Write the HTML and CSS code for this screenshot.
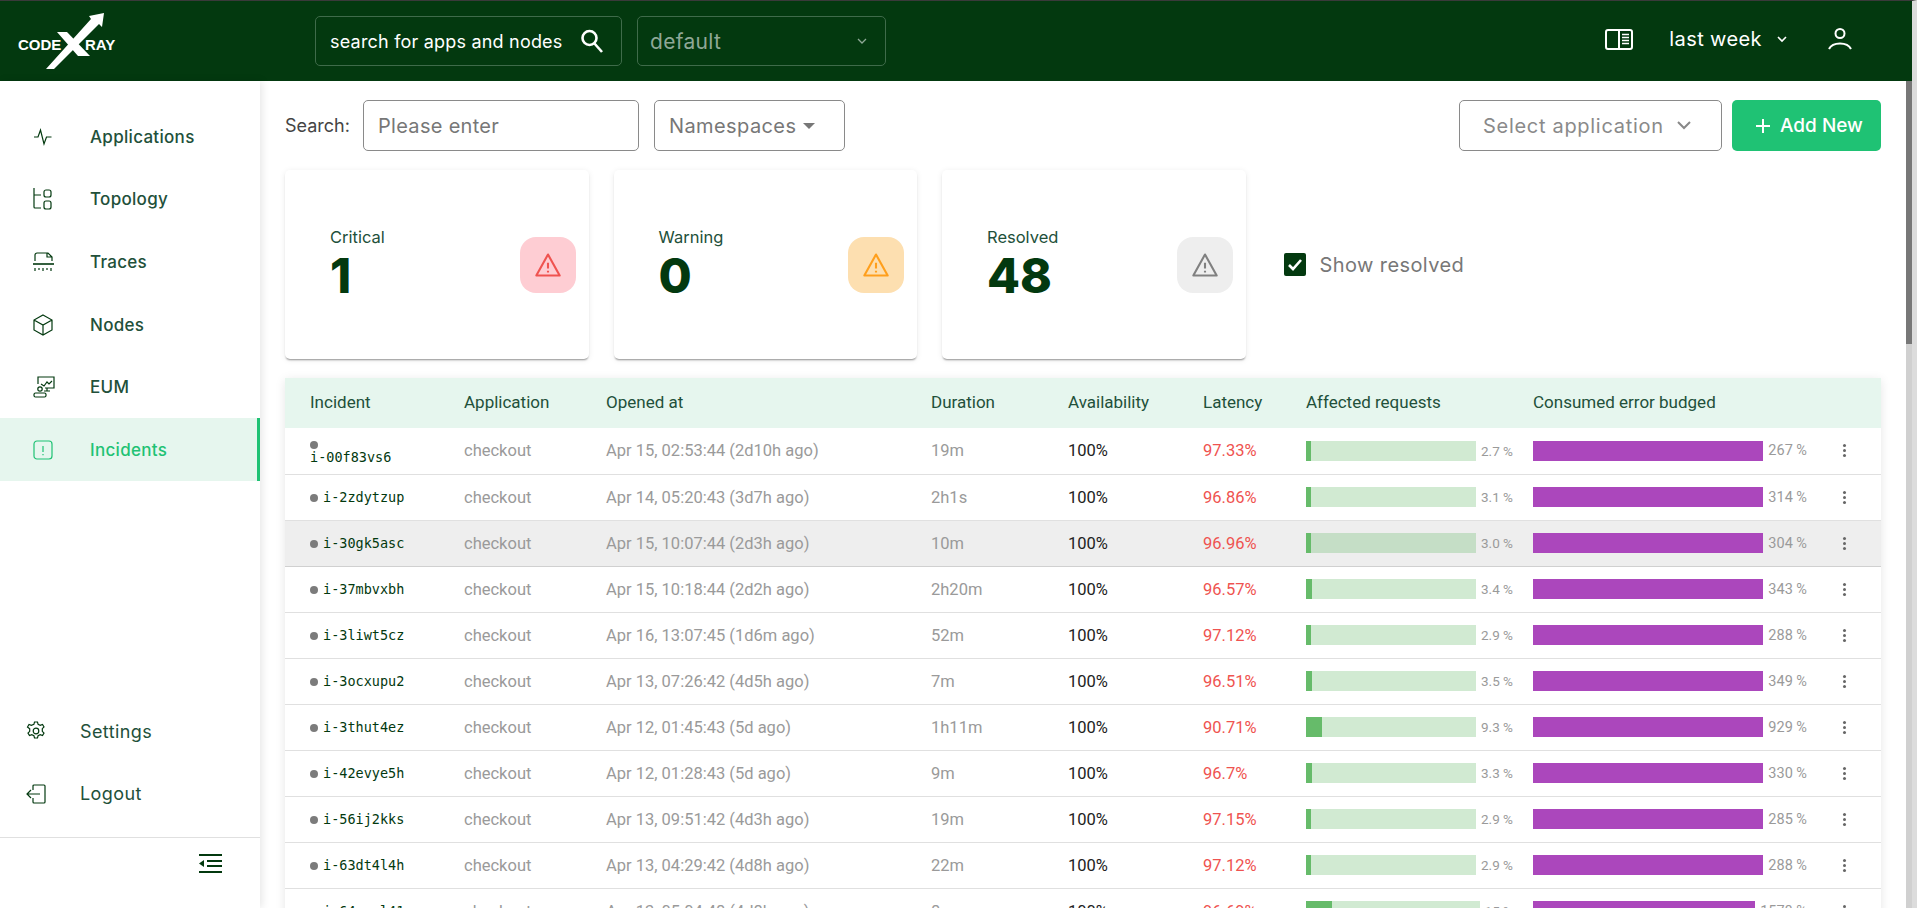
FILE: index.html
```html
<!DOCTYPE html>
<html lang="en">
<head>
  <meta charset="UTF-8" />
  <meta name="viewport" content="width=device-width, initial-scale=1" />
  <title>Incidents</title>
  <link rel="stylesheet" href="styles.css">
</head>
<body>
  <header class="topbar">
    <a class="logo" href="#">
      <svg width="104" height="60" viewBox="0 0 104 60">
        <text class="logo-text" x="0" y="40">CODE</text>
        <text class="logo-text" x="67" y="40">RAY</text>
        <polygon fill="#fff" points="39,22 49,22 72,46 60,46"/>
        <polygon fill="#fff" points="28,59 73,9 71,6 86,3 84,17 81,14 36,59"/>
      </svg>
    </a>
    <div class="top-search">
      <span>search for apps and nodes</span>
      <svg width="26" height="26" viewBox="0 0 26 26" fill="none" stroke="#fff" stroke-width="2.6"><circle cx="10.5" cy="10" r="7"/><path d="M15.5 15.5 23 24"/></svg>
    </div>
    <div class="top-select">
      <span>default</span>
      <svg width="10" height="6" viewBox="0 0 10 6" fill="none" stroke="#8fa897" stroke-width="1.3"><path d="M1 1l4 4 4-4"/></svg>
    </div>
    <div class="top-right">
      <svg width="28" height="21" viewBox="0 0 28 21" fill="none" stroke="#fff" stroke-width="2"><rect x="1" y="1" width="26" height="19" rx="2"/><path d="M14 1v19"/><path d="M17 5.500h7M17 8.500h7M17 11.500h7M17 14.500h7" stroke-width="1.500"/></svg>
      <div class="period">
        <span>last week</span>
        <svg width="10" height="7" viewBox="0 0 10 7" fill="none" stroke="#fff" stroke-width="1.600"><path d="M1 1l4 4 4-4"/></svg>
      </div>
      <svg width="24" height="22" viewBox="0 0 24 22" fill="none" stroke="#fff" stroke-width="2"><circle cx="12" cy="5.500" r="4.500"/><path d="M1 21c2-4 6.500-5.500 11-5.500S21 17 23 21"/></svg>
    </div>
  </header>

  <div class="app">
    <aside class="sidebar">
      <nav class="menu">
        <a class="menu-item" href="#">
          <svg width="20" height="20" viewBox="0 0 20 20" fill="none" stroke="#03390f" stroke-width="1.200"><path d="M1 10h4l2.500-7 3.500 14 2.500-7h5"/></svg>
          <span>Applications</span>
        </a>
        <a class="menu-item" href="#">
          <svg width="20" height="22" viewBox="0 0 20 22" fill="none" stroke="#03390f" stroke-width="1.200"><path d="M1 0v19a1 1 0 0 0 1 1h6M1 7h7"/><rect x="11" y="2" width="7" height="7" rx="2"/><rect x="11" y="13" width="7" height="8" rx="2"/></svg>
          <span>Topology</span>
        </a>
        <a class="menu-item" href="#">
          <svg width="21" height="20" viewBox="0 0 21 20" fill="none" stroke="#03390f" stroke-width="1.200"><path d="M2 9V3a2 2 0 0 1 2-2h11l4 4v4M14 1v4h5"/><path d="M0 12h21" stroke-width="1.600"/><path d="M2 16v3M6 16v2M10 16v3M14 16v2M18 16v3"/></svg>
          <span>Traces</span>
        </a>
        <a class="menu-item" href="#">
          <svg width="20" height="22" viewBox="0 0 20 22" fill="none" stroke="#03390f" stroke-width="1.200"><path d="M10 1l9 5v10l-9 5-9-5V6zM1 6l9 5 9-5M10 11v10"/></svg>
          <span>Nodes</span>
        </a>
        <a class="menu-item" href="#">
          <svg width="22" height="22" viewBox="0 0 22 22" fill="none" stroke="#03390f" stroke-width="1.200"><path d="M5 8V1h16v11h-9M14 12v3M11 15h6"/><path d="M8 8l3 2 3-4 2 2 3-3"/><circle cx="7" cy="13" r="2.200"/><rect x="1" y="17" width="12" height="4" rx="1.500"/></svg>
          <span>EUM</span>
        </a>
        <a class="menu-item menu-active" href="#">
          <svg width="20" height="20" viewBox="0 0 20 20" fill="none" stroke="#1fc274" stroke-width="1.200"><rect x="1" y="1" width="18" height="18" rx="3"/><path d="M10 6v6M10 14v1.200"/></svg>
          <span>Incidents</span>
        </a>
      </nav>
      <div class="menu-bottom">
        <a class="menu-item" href="#">
          <svg width="20" height="20" viewBox="0 0 20 20" fill="none" stroke="#03390f" stroke-width="1.200"><circle cx="10" cy="10" r="2.800"/><path d="M8.500 1h3l.6 2.400 2.100 1 2.300-1 1.500 2.600-1.700 1.700v2.600l1.700 1.700-1.500 2.600-2.300-1-2.100 1-.6 2.400h-3l-.6-2.400-2.100-1-2.300 1-1.500-2.600 1.700-1.700V7.700L1.500 6 3 3.400l2.300 1 2.600-1z"/></svg>
          <span>Settings</span>
        </a>
        <a class="menu-item" href="#">
          <svg width="20" height="20" viewBox="0 0 20 20" fill="none" stroke="#03390f" stroke-width="1.200"><path d="M7 6V2a1 1 0 0 1 1-1h10a1 1 0 0 1 1 1v16a1 1 0 0 1-1 1H8a1 1 0 0 1-1-1v-4M14 10H1M5 6l-4 4 4 4"/></svg>
          <span>Logout</span>
        </a>
      </div>
      <div class="collapse">
        <svg width="23" height="20" viewBox="0 0 23 20" fill="#03390f"><rect width="23" height="2"/><rect x="8" y="6" width="15" height="2"/><rect x="8" y="11" width="15" height="2"/><rect y="17" width="23" height="2"/><path d="M0 9.500 5 6v7z"/></svg>
      </div>
    </aside>

    <main class="content">
      <div class="filters">
        <label class="search-label" for="busca">Search:</label>
        <input class="search-input" id="busca" type="text" placeholder="Please enter">
        <button class="ns-btn">Namespaces <i class="caret"></i></button>
        <button class="app-btn">
          Select application
          <svg width="14" height="9" viewBox="0 0 14 9" fill="none" stroke="#888" stroke-width="2"><path d="M1 1l6 6 6-6"/></svg>
        </button>
        <button class="add-btn">
          <svg width="14" height="14" viewBox="0 0 14 14" stroke="#fff" stroke-width="2"><path d="M7 0v14M0 7h14"/></svg>
          Add New
        </button>
      </div>

      <section class="summary">
        <div class="card">
          <div class="card-text"><span class="card-label">Critical</span><strong class="card-num">1</strong></div>
          <div class="tile tile-red">
            <svg width="28" height="28" viewBox="0 0 24 24" fill="none" stroke="#ef5350" stroke-width="1.800" stroke-linejoin="round"><path d="M12 3 22 21H2zM12 10v5M12 17v1.500"/></svg>
          </div>
        </div>
        <div class="card">
          <div class="card-text"><span class="card-label">Warning</span><strong class="card-num">0</strong></div>
          <div class="tile tile-orange">
            <svg width="28" height="28" viewBox="0 0 24 24" fill="none" stroke="#ff9f1c" stroke-width="1.800" stroke-linejoin="round"><path d="M12 3 22 21H2zM12 10v5M12 17v1.500"/></svg>
          </div>
        </div>
        <div class="card">
          <div class="card-text"><span class="card-label">Resolved</span><strong class="card-num">48</strong></div>
          <div class="tile tile-gray">
            <svg width="28" height="28" viewBox="0 0 24 24" fill="none" stroke="#808080" stroke-width="1.800" stroke-linejoin="round"><path d="M12 3 22 21H2zM12 10v5M12 17v1.500"/></svg>
          </div>
        </div>
        <label class="show-resolved">
          <span class="check"><svg width="16" height="14" viewBox="0 0 16 14" fill="none" stroke="#fff" stroke-width="2.600"><path d="M2 7l4 4 8-9"/></svg></span>
          Show resolved
        </label>
      </section>

      <table class="incidents">
        <colgroup>
          <col class="c-id"><col class="c-app"><col class="c-open"><col class="c-dur"><col class="c-avail"><col class="c-lat"><col class="c-req"><col class="c-budget"><col class="c-menu">
        </colgroup>
        <thead>
          <tr>
            <th>Incident</th><th>Application</th><th>Opened at</th><th>Duration</th><th>Availability</th><th>Latency</th><th>Affected requests</th><th class="budget">Consumed error budged</th><th></th>
          </tr>
        </thead>
        <tbody>
          <tr>
            <td class="inc"><i class="dot"></i><br><span>i-00f83vs6</span></td><td class="muted">checkout</td><td class="muted">Apr 15, 02:53:44 (2d10h ago)</td><td class="muted">19m</td><td class="avail">100%</td><td class="lat">97.33%</td>
            <td><div class="meter"><div class="bar bar-green"><div class="fill" style="width:2.7%"></div></div><span>2.7 %</span></div></td>
            <td class="budget"><div class="meter"><div class="bar bar-purple"></div><span>267 %</span></div></td>
            <td class="more"><b></b></td>
          </tr>
          <tr>
            <td class="inc"><i class="dot"></i><span>i-2zdytzup</span></td><td class="muted">checkout</td><td class="muted">Apr 14, 05:20:43 (3d7h ago)</td><td class="muted">2h1s</td><td class="avail">100%</td><td class="lat">96.86%</td>
            <td><div class="meter"><div class="bar bar-green"><div class="fill" style="width:3.1%"></div></div><span>3.1 %</span></div></td>
            <td class="budget"><div class="meter"><div class="bar bar-purple"></div><span>314 %</span></div></td>
            <td class="more"><b></b></td>
          </tr>
          <tr class="row-hover">
            <td class="inc"><i class="dot"></i><span>i-30gk5asc</span></td><td class="muted">checkout</td><td class="muted">Apr 15, 10:07:44 (2d3h ago)</td><td class="muted">10m</td><td class="avail">100%</td><td class="lat">96.96%</td>
            <td><div class="meter"><div class="bar bar-green"><div class="fill" style="width:3%"></div></div><span>3.0 %</span></div></td>
            <td class="budget"><div class="meter"><div class="bar bar-purple"></div><span>304 %</span></div></td>
            <td class="more"><b></b></td>
          </tr>
          <tr>
            <td class="inc"><i class="dot"></i><span>i-37mbvxbh</span></td><td class="muted">checkout</td><td class="muted">Apr 15, 10:18:44 (2d2h ago)</td><td class="muted">2h20m</td><td class="avail">100%</td><td class="lat">96.57%</td>
            <td><div class="meter"><div class="bar bar-green"><div class="fill" style="width:3.4%"></div></div><span>3.4 %</span></div></td>
            <td class="budget"><div class="meter"><div class="bar bar-purple"></div><span>343 %</span></div></td>
            <td class="more"><b></b></td>
          </tr>
          <tr>
            <td class="inc"><i class="dot"></i><span>i-3liwt5cz</span></td><td class="muted">checkout</td><td class="muted">Apr 16, 13:07:45 (1d6m ago)</td><td class="muted">52m</td><td class="avail">100%</td><td class="lat">97.12%</td>
            <td><div class="meter"><div class="bar bar-green"><div class="fill" style="width:2.9%"></div></div><span>2.9 %</span></div></td>
            <td class="budget"><div class="meter"><div class="bar bar-purple"></div><span>288 %</span></div></td>
            <td class="more"><b></b></td>
          </tr>
          <tr>
            <td class="inc"><i class="dot"></i><span>i-3ocxupu2</span></td><td class="muted">checkout</td><td class="muted">Apr 13, 07:26:42 (4d5h ago)</td><td class="muted">7m</td><td class="avail">100%</td><td class="lat">96.51%</td>
            <td><div class="meter"><div class="bar bar-green"><div class="fill" style="width:3.5%"></div></div><span>3.5 %</span></div></td>
            <td class="budget"><div class="meter"><div class="bar bar-purple"></div><span>349 %</span></div></td>
            <td class="more"><b></b></td>
          </tr>
          <tr>
            <td class="inc"><i class="dot"></i><span>i-3thut4ez</span></td><td class="muted">checkout</td><td class="muted">Apr 12, 01:45:43 (5d ago)</td><td class="muted">1h11m</td><td class="avail">100%</td><td class="lat">90.71%</td>
            <td><div class="meter"><div class="bar bar-green"><div class="fill" style="width:9.3%"></div></div><span>9.3 %</span></div></td>
            <td class="budget"><div class="meter"><div class="bar bar-purple"></div><span>929 %</span></div></td>
            <td class="more"><b></b></td>
          </tr>
          <tr>
            <td class="inc"><i class="dot"></i><span>i-42evye5h</span></td><td class="muted">checkout</td><td class="muted">Apr 12, 01:28:43 (5d ago)</td><td class="muted">9m</td><td class="avail">100%</td><td class="lat">96.7%</td>
            <td><div class="meter"><div class="bar bar-green"><div class="fill" style="width:3.3%"></div></div><span>3.3 %</span></div></td>
            <td class="budget"><div class="meter"><div class="bar bar-purple"></div><span>330 %</span></div></td>
            <td class="more"><b></b></td>
          </tr>
          <tr>
            <td class="inc"><i class="dot"></i><span>i-56ij2kks</span></td><td class="muted">checkout</td><td class="muted">Apr 13, 09:51:42 (4d3h ago)</td><td class="muted">19m</td><td class="avail">100%</td><td class="lat">97.15%</td>
            <td><div class="meter"><div class="bar bar-green"><div class="fill" style="width:2.9%"></div></div><span>2.9 %</span></div></td>
            <td class="budget"><div class="meter"><div class="bar bar-purple"></div><span>285 %</span></div></td>
            <td class="more"><b></b></td>
          </tr>
          <tr>
            <td class="inc"><i class="dot"></i><span>i-63dt4l4h</span></td><td class="muted">checkout</td><td class="muted">Apr 13, 04:29:42 (4d8h ago)</td><td class="muted">22m</td><td class="avail">100%</td><td class="lat">97.12%</td>
            <td><div class="meter"><div class="bar bar-green"><div class="fill" style="width:2.9%"></div></div><span>2.9 %</span></div></td>
            <td class="budget"><div class="meter"><div class="bar bar-purple"></div><span>288 %</span></div></td>
            <td class="more"><b></b></td>
          </tr>
          <tr>
            <td class="inc"><i class="dot"></i><span>i-64wsql41</span></td><td class="muted">checkout</td><td class="muted">Apr 13, 05:04:48 (4d8h ago)</td><td class="muted">8m</td><td class="avail">100%</td><td class="lat">96.69%</td>
            <td><div class="meter"><div class="bar bar-green"><div class="fill" style="width:15%"></div></div><span>15 %</span></div></td>
            <td class="budget"><div class="meter"><div class="bar bar-purple"></div><span>1578 %</span></div></td>
            <td class="more"><b></b></td>
          </tr>
        </tbody>
      </table>
    </main>

    <div class="rail"><div class="rail-thumb"></div></div>
  </div>
</body>
</html>
```

FILE: styles.css
```css
:root {
  --verde-escuro: #03390f;
  --verde-texto: #22503a;
  --verde: #1fc274;
  --verde-claro: #e6f6ee;
  --cinza-texto: #9a9a9a;
  --borda: #e0e0e0;
}

* {
  box-sizing: border-box;
}

html,
body {
  height: 100%;
}

body {
  margin: 0;
  overflow: hidden;
  display: flex;
  flex-direction: column;
  font-family: Inter, sans-serif;
  background: #fff;
  border-top: 1px solid #3a3a3a;
  border-right: 5px solid #dcdcdc;
}

a {
  text-decoration: none;
  color: inherit;
}

svg {
  flex: none;
  display: block;
}

.topbar {
  flex: none;
  height: 80px;
  display: flex;
  align-items: center;
  background: var(--verde-escuro);
}

.logo {
  width: 315px;
  padding: 0 0 2px 18px;
}

.logo-text {
  font: 700 15px "Liberation Sans", sans-serif;
  fill: #fff;
}

.top-search,
.top-select {
  height: 50px;
  display: flex;
  align-items: center;
  justify-content: space-between;
  border: 1px solid #3f6b4a;
  border-radius: 5px;
}

.top-search {
  width: 307px;
  padding: 0 16px 0 14px;
  margin-right: 15px;
  color: #fff;
  font-size: 18px;
  letter-spacing: 0.2px;
}

.top-select {
  width: 249px;
  padding: 0 18px 0 12px;
  color: #8fa897;
  font-size: 21px;
  letter-spacing: 0.3px;
}

.top-right {
  margin-left: auto;
  display: flex;
  align-items: center;
  padding: 0 60px 0 0;
  margin-bottom: 4px;
}

.period {
  display: flex;
  align-items: center;
  gap: 15px;
  margin: 0 41px 0 36px;
  color: #fff;
  font-size: 20px;
  letter-spacing: 0.4px;
}

.app {
  flex: 1;
  min-height: 0;
  display: flex;
}

.sidebar {
  flex: none;
  width: 260px;
  display: flex;
  flex-direction: column;
  padding-top: 24.5px;
  box-shadow: 2px 0 8px rgba(0, 0, 0, 0.1);
  position: relative;
  color: var(--verde-texto);
}

.menu-item {
  height: 62.6px;
  display: grid;
  grid-template-columns: 57px 1fr;
  align-items: center;
  padding-left: 33px;
  font-size: 17px;
  font-weight: 500;
  letter-spacing: 0.3px;
}

.menu-active {
  background: var(--verde-claro);
  color: var(--verde);
  border-right: 3px solid var(--verde);
}

.menu-bottom {
  margin-top: auto;
  padding-bottom: 12px;
  border-bottom: 1px solid var(--borda);
}

.menu-bottom .menu-item {
  grid-template-columns: 54px 1fr;
  padding-left: 26px;
  font-size: 18px;
  font-weight: 400;
  letter-spacing: 0.4px;
}

.collapse {
  height: 70px;
  padding: 16px 0 0 199px;
}

.content {
  flex: 1;
  min-width: 0;
  overflow: hidden;
  padding: 19px 25px 0;
}

.rail {
  flex: none;
  width: 6px;
  background: #d0d0d0;
}

.rail-thumb {
  height: 263px;
  background: #777;
}

.filters {
  display: flex;
  align-items: center;
  height: 51px;
}

.search-label {
  width: 78px;
  color: #444;
  font-size: 18px;
}

.search-input {
  width: 276px;
  height: 51px;
  padding: 0 14px;
  margin-right: 15px;
  border: 1px solid #8a8a8a;
  border-radius: 5px;
  font: 20px Inter, sans-serif;
  letter-spacing: 0.3px;
}

.search-input::placeholder {
  color: #777;
}

.ns-btn,
.app-btn,
.add-btn {
  height: 51px;
  display: flex;
  align-items: center;
  border-radius: 5px;
  font: 20px Inter, sans-serif;
  cursor: pointer;
}

.ns-btn {
  width: 191px;
  padding: 0 14px;
  gap: 7px;
  background: #fff;
  border: 1px solid #8a8a8a;
  color: #777;
  letter-spacing: 0.4px;
}

.caret {
  border: 6px solid transparent;
  border-top: 6px solid #777;
  border-bottom: 0;
}

.app-btn {
  width: 263px;
  margin-left: auto;
  padding: 0 30px 0 23px;
  justify-content: space-between;
  background: #fff;
  border: 1px solid #8a8a8a;
  color: #8a8a8a;
  letter-spacing: 0.7px;
}

.add-btn {
  width: 149px;
  margin-left: 10px;
  padding: 0 0 0 24px;
  gap: 10px;
  background: var(--verde);
  border: none;
  color: #fff;
  font-size: 19px;
  font-weight: 500;
}

.summary {
  display: flex;
  align-items: center;
  gap: 25px;
  margin: 19px 0;
}

.card {
  width: 303.5px;
  height: 189px;
  display: flex;
  align-items: center;
  justify-content: space-between;
  padding: 0 13px 0 45px;
  border-radius: 5px;
  box-shadow: 0 2px 2px -1px rgba(0, 0, 0, 0.4), 0 1px 6px rgba(0, 0, 0, 0.08);
}

.card-text {
  display: flex;
  flex-direction: column;
  margin-top: 3px;
}

.card-label {
  font-size: 16.5px;
  color: var(--verde-texto);
}

.card-num {
  font-size: 48px;
  line-height: 58px;
  font-weight: 800;
  color: var(--verde-escuro);
}

.tile {
  width: 56px;
  height: 56px;
  display: flex;
  align-items: center;
  justify-content: center;
  border-radius: 16px;
}

.tile-red {
  background: #fecdd3;
}

.tile-orange {
  background: #fddfb0;
}

.tile-gray {
  background: #eeeeee;
}

.show-resolved {
  display: flex;
  align-items: center;
  gap: 14px;
  margin-left: 13px;
  color: #777;
  font-size: 20px;
  letter-spacing: 0.4px;
}

.check {
  width: 22px;
  height: 23px;
  display: flex;
  align-items: center;
  justify-content: center;
  background: var(--verde-escuro);
  border-radius: 2px;
}

.incidents {
  width: 100%;
  table-layout: fixed;
  border-collapse: collapse;
  font-family: Roboto, sans-serif;
  font-size: 16.5px;
  box-shadow: 0 2px 10px rgba(0, 0, 0, 0.1);
}

.c-id { width: 154px; }
.c-app { width: 142px; }
.c-open { width: 325px; }
.c-dur { width: 137px; }
.c-avail { width: 135px; }
.c-lat { width: 103px; }
.c-req { width: 232px; }
.c-budget { width: 294px; }
.c-menu { width: 74px; }

.incidents th {
  height: 50px;
  padding: 0 0 2px 25px;
  background: var(--verde-claro);
  color: var(--verde-texto);
  font-size: 17px;
  font-weight: 400;
  text-align: left;
}

.incidents td {
  height: 46px;
  padding: 0 0 0 25px;
  border-bottom: 1px solid var(--borda);
}

.incidents .budget {
  padding-left: 20px;
}

.row-hover td {
  background: #eeeeee;
  border-bottom-color: #d0d0d0;
}

.muted {
  color: var(--cinza-texto);
}

.avail {
  color: #222;
}

.lat {
  color: #ef5350;
}

.incidents .inc {
  font: 13.5px "DejaVu Sans Mono", monospace;
  color: var(--verde-escuro);
  line-height: 13px;
  padding-top: 0;
}

.dot {
  display: inline-block;
  width: 8px;
  height: 8px;
  margin-right: 5px;
  border-radius: 50%;
  background: #7b7b7b;
}

.meter {
  display: flex;
  align-items: center;
  gap: 5px;
  color: var(--cinza-texto);
  font-size: 13.5px;
}

.budget .meter {
  font-size: 14.5px;
}

.bar {
  flex: 1;
  height: 20px;
}

.bar-green {
  background: rgba(102, 187, 106, 0.3);
}

.bar-purple {
  background: #ab47bc;
}

.fill {
  height: 100%;
  background: #66bb6a;
}

.incidents .more {
  padding-left: 36px;
}

.more b {
  display: block;
  width: 3px;
  height: 3px;
  background: #666;
  box-shadow: 0 -5px 0 #666, 0 5px 0 #666;
  border-radius: 50%;
}
```
